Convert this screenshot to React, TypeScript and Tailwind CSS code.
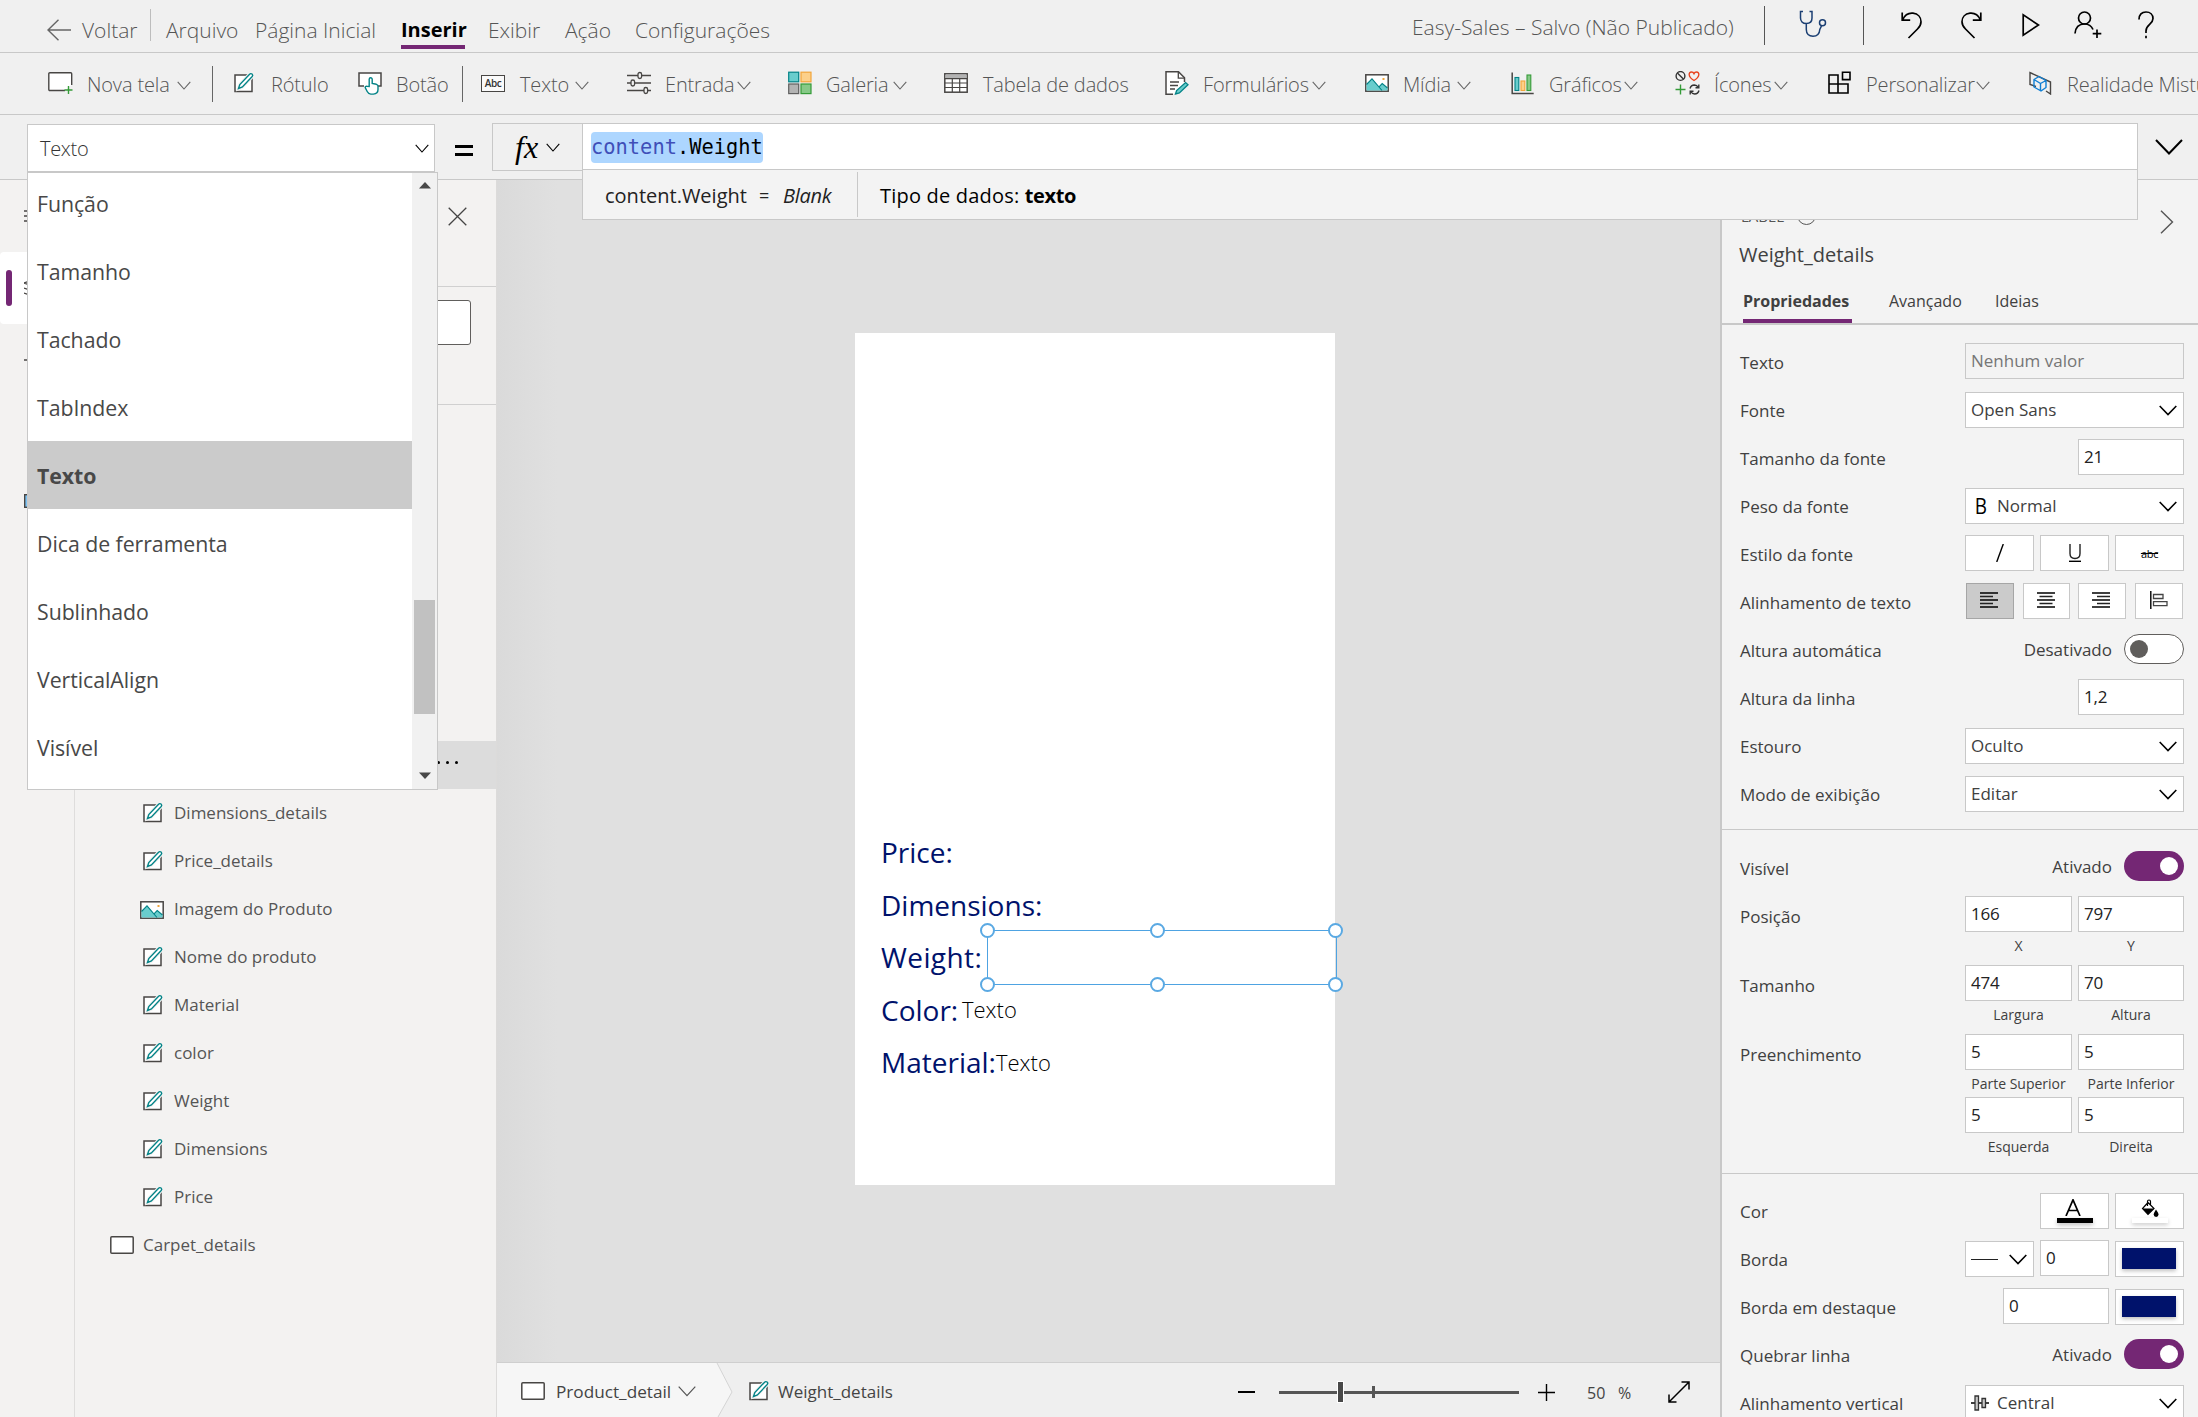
import type { ReactNode } from 'react';

function Svg({ w, h, className = '', children }: { w: number; h: number; className?: string; children: ReactNode }) {
  return (
    <svg width={w} height={h} viewBox={`0 0 ${w} ${h}`} fill="none" className={`shrink-0 ${className}`}>
      {children}
    </svg>
  );
}

function Chevron({ className = '' }: { className?: string }) {
  return (
    <Svg w={14} h={9} className={className}>
      <path d="M0.7 0.8 7 8 13.3 0.8" stroke="currentColor" strokeWidth="1.1" />
    </Svg>
  );
}

function LabelIcon() {
  return (
    <Svg w={24} h={22}>
      <rect x="1" y="3" width="17" height="16.5" fill="#fff" stroke="#484644" strokeWidth="1.5" />
      <path d="M4.5 16.5 5.8 12.6 15.6 2.2a1.7 1.7 0 0 1 2.6 2.3L8.4 15z" fill="#fff" stroke="#f3f2f1" strokeWidth="3.4" />
      <path d="M4.5 16.5 5.8 12.6 15.6 2.2a1.7 1.7 0 0 1 2.6 2.3L8.4 15z" fill="#fff" stroke="#038387" strokeWidth="1.4" />
    </Svg>
  );
}

function ScreenIcon() {
  return (
    <Svg w={24} h={18}>
      <rect x="0.8" y="0.8" width="22.4" height="16.4" rx="1" fill="#fff" stroke="#484644" strokeWidth="1.5" />
    </Svg>
  );
}

function ImageIcon() {
  return (
    <Svg w={24} h={18}>
      <rect x="0.8" y="0.8" width="22.4" height="16.4" fill="#fff" stroke="#484644" strokeWidth="1.5" />
      <path d="M1.5 16.5V10.5L7 4.8l7 8 3.2-3.3 5.3 4.5v2.5z" fill="#69cdcd" />
      <path d="M1.5 10.5 7 4.8l10 11.7M14 12.8l3.2-3.3 5.3 4.5" stroke="#038387" strokeWidth="1.1" />
      <rect x="17.5" y="4" width="2" height="2" fill="#f2a63b" />
    </Svg>
  );
}

const newScreenIcon = (
  <Svg w={26} h={22}>
    <path d="M17 18.5H1.8a1 1 0 0 1-1-1V1.8a1 1 0 0 1 1-1h20.9a1 1 0 0 1 1 1V13" fill="#fff" stroke="#484644" strokeWidth="1.4" />
    <path d="M20.5 14v8M16.5 18h8" stroke="#359b38" strokeWidth="1.4" />
  </Svg>
);

const buttonIcon = (
  <Svg w={24} h={24}>
    <path d="M6 15H1V2h22v13h-3" fill="#fff" stroke="#484644" strokeWidth="1.5" />
    <path
      d="M11.2 15.5V8.2a1.5 1.5 0 0 1 3 0v4.3l4.2.8q1.6.5 1.6 2v3.2q0 4.2-4.6 4.6h-2.6q-2.4-.2-3.6-2.6l-2-3.8q0-1.6 1.6-1.4z"
      fill="#fff"
      stroke="#038387"
      strokeWidth="1.4"
    />
  </Svg>
);

const textIcon = (
  <div className="flex h-[17px] w-6 items-center justify-center border-[1.5px] border-[#484644] bg-[#fafafa] text-[10px] leading-none font-semibold tracking-[-0.4px] text-[#333]">
    Abc
  </div>
);

const inputIcon = (
  <Svg w={24} h={24}>
    <path d="M0 4.5h24M0 12h24M0 19.5h24" stroke="#484644" strokeWidth="1.4" />
    <g fill="#f0f0f0" stroke="#484644" strokeWidth="1.3">
      <rect x="11" y="1.5" width="3.6" height="6" rx="1.8" />
      <rect x="4" y="9" width="3.6" height="6" rx="1.8" />
      <rect x="17" y="16.5" width="3.6" height="6" rx="1.8" />
    </g>
  </Svg>
);

const galleryIcon = (
  <Svg w={24} h={24}>
    <rect x="0.7" y="1.2" width="10" height="9.6" fill="#69cdcd" stroke="#038387" strokeWidth="1.2" />
    <rect x="13" y="1.2" width="10" height="9.6" fill="#fcd08a" stroke="#f2a63b" strokeWidth="1.2" />
    <rect x="0.7" y="13" width="10" height="9.6" fill="#b3b3b3" stroke="#5f5f5f" strokeWidth="1.2" />
    <rect x="13" y="13" width="10" height="9.6" fill="#86c987" stroke="#359b38" strokeWidth="1.2" />
  </Svg>
);

const tableIcon = (
  <Svg w={24} h={20}>
    <rect x="0.8" y="0.8" width="22.4" height="18.4" fill="#fff" stroke="#484644" strokeWidth="1.5" />
    <rect x="1.5" y="1.5" width="21" height="3.6" fill="#b3b3b3" />
    <path d="M1 5.6h22M1 10h22M1 14.5h22M8.3 5.6V19M15.7 5.6V19" stroke="#484644" strokeWidth="1.2" />
  </Svg>
);

const formIcon = (
  <Svg w={24} h={24}>
    <path d="M8 23.2H1V0.8h12.5l6 6V11" fill="#fff" stroke="#484644" strokeWidth="1.5" />
    <path d="M13.3 1v6.2h6M5 11h9M5 14.5h8M5 18h5" stroke="#484644" strokeWidth="1.3" />
    <path d="M10.5 23 11.6 19.6 20.6 11.6l2.4 2.2-8.6 8.2z" fill="#69cdcd" stroke="#038387" strokeWidth="1.3" />
  </Svg>
);

const chartIcon = (
  <Svg w={24} h={23}>
    <path d="M1.2 0.5v21h21.5" stroke="#484644" strokeWidth="1.5" />
    <rect x="4" y="5.5" width="3.8" height="13" fill="#69cdcd" stroke="#038387" strokeWidth="1.1" />
    <rect x="10" y="9" width="3.8" height="9.5" fill="#fcd08a" stroke="#f2a63b" strokeWidth="1.1" />
    <rect x="16" y="3" width="3.8" height="15.5" fill="#86c987" stroke="#359b38" strokeWidth="1.1" />
  </Svg>
);

const iconsIcon = (
  <Svg w={25} h={24}>
    <circle cx="5.5" cy="5" r="4.4" stroke="#333" strokeWidth="1.4" />
    <path d="m2.4 2 6.2 6.2" stroke="#333" strokeWidth="1.4" />
    <path d="M19 9.5C12.5 5.5 13.5 1 16.5 1q1.8 0 2.5 1.6Q19.7 1 21.5 1c3 0 4 4.5-2.5 8.5z" stroke="#e8431f" strokeWidth="1.4" />
    <path d="M5.5 13.5v10M0.5 18.5h10" stroke="#359b38" strokeWidth="1.4" />
    <path d="M15 17.5q1-3.5 4.3-3.5 2.6.1 4 2.5M23.8 13.5v3.3h-3.3M24 19.5q-1 3.5-4.3 3.5-2.6-.1-4-2.5M15.2 23.5v-3.3h3.3" stroke="#333" strokeWidth="1.4" />
  </Svg>
);

const customIcon = (
  <Svg w={24} h={24}>
    <path d="M1 4h9v18H1zM1 13h19v9H10V13M14.5 1.2h7.5v7.4h-7.5z" stroke="#000" strokeWidth="1.6" />
  </Svg>
);

const mixedIcon = (
  <Svg w={24} h={24}>
    <path d="M7 15.5 1 13.5V1.5l20.5 9.5v12l-4.5-3" stroke="#484644" strokeWidth="1.4" />
    <path d="m5 8.5 5-3 7 4v7l-5 3.5-7-4zM5 8.5l6.5 4 5.5-3M11.5 12.5V20" stroke="#0f7fd4" strokeWidth="1.4" strokeLinejoin="round" />
  </Svg>
);

type RibbonItem = { label: string; icon: ReactNode; item: string; text?: string; sep?: string };

const ribbon: RibbonItem[] = [
  { label: 'Nova tela', icon: newScreenIcon, item: 'w-[164px]', text: 'w-[91px] pl-px', sep: 'mr-[21px]' },
  { label: 'Rótulo', icon: <LabelIcon />, item: 'w-[124px]', text: '-ml-px' },
  { label: 'Botão', icon: buttonIcon, item: 'w-[104px]', sep: 'mr-[18px]' },
  { label: 'Texto', icon: textIcon, item: 'w-[146px]', text: 'w-[56px] pl-px' },
  { label: 'Entrada', icon: inputIcon, item: 'w-[161px]', text: 'w-[72px]' },
  { label: 'Galeria', icon: galleryIcon, item: 'w-[156px]', text: 'w-[67px]' },
  { label: 'Tabela de dados', icon: tableIcon, item: 'w-[221px]', text: 'pl-px' },
  { label: 'Formulários', icon: formIcon, item: 'w-[200px]', text: 'w-[109px]' },
  { label: 'Mídia', icon: <ImageIcon />, item: 'w-[146px]', text: 'w-[54px]' },
  { label: 'Gráficos', icon: chartIcon, item: 'w-[164px]', text: 'w-[75px]' },
  { label: 'Ícones', icon: iconsIcon, item: 'w-[153px]', text: 'w-[61px] pl-px' },
  { label: 'Personalizar', icon: customIcon, item: 'w-[201px]', text: 'w-[110px]' },
  { label: 'Realidade Misturada', icon: mixedIcon, item: 'w-[260px]' },
];

const noChevron = ['Rótulo', 'Botão', 'Tabela de dados', 'Realidade Misturada'];

const menu = [
  { label: 'Arquivo', width: 'w-[89px]' },
  { label: 'Página Inicial', width: 'w-[146px]' },
  { label: 'Inserir', width: 'w-[87px]', active: true },
  { label: 'Exibir', width: 'w-[77px]' },
  { label: 'Ação', width: 'w-[70px]' },
  { label: 'Configurações', width: 'w-[200px]' },
];

function Header() {
  return (
    <header className="flex h-[53px] border-b border-[#c8c8c8] pl-[47px] text-[21px] font-light text-[#555]">
      <div className="flex h-full w-[1365px]">
        <Svg w={24} h={22} className="mt-[19px]">
          <path d="M24 11H1M11.5 0.7 1 11l10.5 10.3" stroke="#666" strokeWidth="1.4" />
        </Svg>
        <span className="ml-[11px] w-[68px] pt-[14px] leading-8">Voltar</span>
        <div className="mr-[15px] mt-[9px] h-8 w-px bg-[#bdbdbd]" />
        {menu.map((m) => (
          <div key={m.label} className={`${m.width} pt-[14px] leading-8`}>
            {m.active ? (
              <span className="flex h-[35px] w-16 border-b-4 border-[#742774] text-[20px] font-bold leading-8 text-black">{m.label}</span>
            ) : (
              m.label
            )}
          </div>
        ))}
      </div>
      <span className="w-[352px] pt-[11px] leading-8">Easy-Sales – Salvo (Não Publicado)</span>
      <div className="mt-[6px] flex h-[40px] items-start text-black">
        <div className="h-[39px] w-px bg-[#555]" />
        <Svg w={28} h={28} className="ml-[34px] mt-[4px]">
          <path d="M4 1.5H1.5v6.500c0 3 2 5.500 5.800 5.500s5.700-2.500 5.700-5.500V1.500h-2.500M7.300 13.500v6c0 4 2.600 6.700 6.700 6.700s6.500-2.700 6.800-6.700l1.700-3.600" stroke="#1b3f73" strokeWidth="1.5" />
          <circle cx="23.5" cy="12.8" r="3" stroke="#1b3f73" strokeWidth="1.5" />
        </Svg>
        <div className="ml-[36px] h-[39px] w-px bg-[#555]" />
        <Svg w={22} h={28} className="ml-[37px] mt-[5px]">
          <path d="M1.200 1.500v7.700h8M1.500 9C4 3.500 8 1.800 12 2.200c5 .5 8 4 8 8.500 0 3-1.200 5-3.500 7.300L7.500 27" stroke="#000" strokeWidth="1.7" />
        </Svg>
        <Svg w={22} h={28} className="ml-[37px] mt-[5px]">
          <path d="M20.800 1.500v7.700h-8M20.500 9C18 3.500 14 1.800 10 2.200c-5 .5-8 4-8 8.500 0 3 1.200 5 3.500 7.300l9 9" stroke="#000" strokeWidth="1.7" />
        </Svg>
        <Svg w={18} h={24} className="ml-[40px] mt-[7px]">
          <path d="M1.200 1.800v20.400L16.500 12z" stroke="#000" strokeWidth="1.7" />
        </Svg>
        <Svg w={28} h={28} className="ml-[34px] mt-[5px]">
          <circle cx="10.5" cy="7" r="6" stroke="#000" strokeWidth="1.7" />
          <path d="M1 22.500c.5-6 4-9.500 9.500-9.500 4 0 7 2 8.500 5.500M23 18.500V27M18.700 22.700h8.600" stroke="#000" strokeWidth="1.7" />
        </Svg>
        <Svg w={16} h={28} className="ml-[36px] mt-[5px]">
          <path d="M1 8.500C1 3.500 3.800 1 8 1s7 2.600 7 6.500c0 6-7 6-7 12.500v2M8 24.800v2.400" stroke="#000" strokeWidth="1.7" />
        </Svg>
      </div>
    </header>
  );
}

function Ribbon() {
  return (
    <div className="flex h-[62px] overflow-hidden border-b border-[#c8c8c8] pl-12 text-[20px] font-light tracking-[-0.15px] text-[#555]">
      {ribbon.map((r) => (
        <div key={r.label} className="flex shrink-0">
          <div className={`flex items-center pb-[1px] ${r.item}`}>
            <div className="flex w-[38px] shrink-0">{r.icon}</div>
            <span className={`shrink-0 pt-[4px] whitespace-nowrap ${r.text ?? ''}`}>{r.label}</span>
            {!noChevron.includes(r.label) && <Chevron className="mt-[5px] text-[#666]" />}
          </div>
          {r.sep && <div className={`mt-[13px] h-9 w-px bg-[#666] ${r.sep}`} />}
        </div>
      ))}
    </div>
  );
}

const propertyNames = ['Função', 'Tamanho', 'Tachado', 'TabIndex', 'Texto', 'Dica de ferramenta', 'Sublinhado', 'VerticalAlign', 'Visível'];

function PropertyDropdown() {
  return (
    <div className="absolute left-0 top-[48px] z-20 flex h-[618px] w-[411px] overflow-hidden border border-[#c8c8c8] bg-white">
      <ul className="-mt-1 flex-1 text-[21.3px] tracking-[-0.05px] text-[#484848]">
        {propertyNames.map((name) => (
          <li
            key={name}
            className={`flex h-[68px] items-center pl-[9px] pt-[2px] ${name === 'Texto' ? 'bg-[#cbcbcb] font-bold' : ''}`}
          >
            {name}
          </li>
        ))}
      </ul>
      <div className="flex w-[25px] flex-col items-center bg-[#f1f1f1]">
        <Svg w={12} h={7} className="mt-[9px]">
          <path d="M0 6.500 6 0l6 6.500z" fill="#484848" />
        </Svg>
        <div className="mt-[411px] h-[114px] w-[21px] bg-[#c1c1c1]" />
        <Svg w={12} h={7} className="mt-[58px]">
          <path d="M0 0.500 6 7l6-6.500z" fill="#484848" />
        </Svg>
      </div>
    </div>
  );
}

function FormulaBar() {
  return (
    <div className="flex h-[65px] border-b border-[#c8c8c8] pl-[27px]">
      <div className="relative mt-[9px] h-12 w-[408px]">
        <div className="flex h-12 items-center justify-between border border-[#c8c8c8] bg-white pl-3 pr-[5px] pt-px text-[20px] font-light tracking-[-0.3px] text-[#333]">
          Texto
          <Chevron className="text-black" />
        </div>
        <PropertyDropdown />
      </div>
      <div className="ml-[20px] mt-[30px] flex h-[11px] w-[18px] flex-col justify-between">
        <div className="h-[3px] bg-black" />
        <div className="h-[3px] bg-black" />
      </div>
      <div className="ml-[19px] mt-[8px] flex h-12 w-[91px] items-center border border-r-0 border-[#c8c8c8] pl-[22px]">
        <span className="w-[31px] font-['Liberation_Serif',serif] text-[32px] font-normal italic leading-none text-black">fx</span>
        <Chevron className="text-black" />
      </div>
      <div className="relative -ml-px mt-[8px] h-12 w-[1556px] border border-[#c8c8c8] bg-white">
        <div className="flex h-full items-center pl-[8px]">
          <span className="h-[31px] rounded-[4px] bg-[#add6ff] font-['DejaVu_Sans_Mono',monospace] text-[20.4px] leading-[31px] whitespace-nowrap text-black">
            <span className="text-[#3f4fb8]">content</span>.Weight
          </span>
        </div>
        <div className="absolute -left-px top-[45px] z-10 flex h-[51px] w-[1556px] border border-[#c8c8c8] bg-[#f3f3f3] text-[20px] leading-[51px] text-[#222]">
          <span className="ml-[22px] w-[154px]">content.Weight</span>
          <span className="w-[24px] text-[18px]">=</span>
          <span className="w-[74px] italic tracking-[-0.3px]">Blank</span>
          <div className="mt-[2px] h-[45px] w-px bg-[#c8c8c8]" />
          <span className="ml-[22px] tracking-[0.2px] text-black">
            Tipo de dados: <b className="tracking-[-0.4px]">texto</b>
          </span>
        </div>
      </div>
      <Svg w={28} h={16} className="ml-[17px] mt-[24px]">
        <path d="M1 1l13 13.500L27 1" stroke="#000" strokeWidth="2" />
      </Svg>
    </div>
  );
}

function Rail() {
  return (
    <nav className="flex w-[75px] flex-col border-r border-[#dedddc]">
      <div className="flex h-[72px] items-center pl-6">
        <Svg w={20} h={12}>
          <path d="M0 1h20M0 6h20M0 11h20" stroke="#484644" strokeWidth="1.3" />
        </Svg>
      </div>
      <div className="flex h-[72px] items-center rounded-[4px] bg-white pl-[6px]">
        <div className="h-9 w-[6px] rounded-full bg-[#742774]" />
        <Svg w={24} h={20} className="ml-3">
          <path d="m0 5 12-4 12 4-12 4zM0 10l12 4 12-4M0 15l12 4 12-4" stroke="#484644" strokeWidth="1.3" />
        </Svg>
      </div>
      <div className="flex h-[72px] items-center pl-6">
        <Svg w={22} h={22}>
          <path d="M0 11h22M11 0v22" stroke="#484644" strokeWidth="1.3" />
        </Svg>
      </div>
      <div className="flex h-[72px] items-center pl-[27px]">
        <Svg w={20} h={20}>
          <rect x="0.7" y="1" width="18" height="18" rx="3" fill="#5cb3f0" stroke="#484644" />
        </Svg>
      </div>
      <div className="flex h-[66px] items-center pl-6">
        <Svg w={22} h={14}>
          <rect x="0.7" y="0.7" width="20" height="12.6" fill="#7cc1f2" stroke="#484644" strokeWidth="1.4" />
        </Svg>
      </div>
    </nav>
  );
}

const treeItems = [
  'Dimensions_details',
  'Price_details',
  'Imagem do Produto',
  'Nome do produto',
  'Material',
  'color',
  'Weight',
  'Dimensions',
  'Price',
];

function TreePanel() {
  return (
    <aside className="flex w-[422px] flex-col border-r border-[#dcdbda] text-[17px] text-[#555]">
      <div className="flex h-[107px] shrink-0 justify-end border-b border-[#d0d0d0] pr-[29px] pt-[27px]">
        <Svg w={19} h={19}>
          <path d="M0.7 0.7l17.6 17.6M18.3 0.7 0.7 18.3" stroke="#444" strokeWidth="1.3" />
        </Svg>
      </div>
      <div className="flex h-[118px] shrink-0 justify-end border-b border-[#d0d0d0] pr-[25px] pt-[13px]">
        <div className="h-[45px] w-[360px] rounded-[3px] border border-[#605e5c] bg-white" />
      </div>
      <div className="mt-[336px] flex h-12 shrink-0 items-start justify-end gap-[6px] bg-[#dcdcdc] pr-[38px] pt-[20px]">
        <i className="size-[3px] rounded-full bg-black" />
        <i className="size-[3px] rounded-full bg-black" />
        <i className="size-[3px] rounded-full bg-black" />
      </div>
      {treeItems.map((name) => (
        <div key={name} className="flex h-12 shrink-0 items-center">
          <div className={name === 'Imagem do Produto' ? 'ml-[65px] w-[34px] pt-[1px]' : 'ml-[68px] w-[31px]'}>
            {name === 'Imagem do Produto' ? <ImageIcon /> : <LabelIcon />}
          </div>
          {name}
        </div>
      ))}
      <div className="flex h-12 shrink-0 items-center gap-[9px] pl-[35px]">
        <ScreenIcon />
        Carpet_details
      </div>
    </aside>
  );
}

const screenLabels = [
  { name: 'Price:' },
  { name: 'Dimensions:' },
  { name: 'Weight:', width: 'w-[103px] tracking-[0.4px]' },
  { name: 'Color:', value: 'Texto', width: 'w-[81px]' },
  { name: 'Material:', value: 'Texto', width: 'w-[115px]' },
];

function Handle() {
  return <i className="size-[15px] rounded-full border-2 border-[#5aa9e3] bg-white" />;
}

function Stage() {
  return (
    <div className="flex h-[1182px] items-start bg-[linear-gradient(to_right,#dadada,#e0e0e0_60px)] pl-[358px] pt-[153px]">
      <div className="relative h-[852px] w-[480px] bg-white pl-[26px] pt-[493px] text-[28px] text-[#00126b]">
        {screenLabels.map((l) => (
          <div key={l.name} className="flex h-[52.5px] items-center">
            <span className={`whitespace-nowrap ${l.width ?? ''}`}>{l.name}</span>
            {l.value && <span className="text-[22px] font-light text-black">{l.value}</span>}
          </div>
        ))}
        {/* selection frame with resize handles */}
        <div className="absolute left-[132px] top-[597px] h-[55px] w-[350px] border-[1.5px] border-[#4ea3e2]">
          <div className="absolute -left-[8px] -right-[7px] -top-[8px] grid grid-cols-[178px_1fr_15px] [&>i:nth-child(2)]:-ml-[8px]">
            <Handle />
            <Handle />
            <Handle />
          </div>
          <div className="absolute -bottom-[8px] -left-[8px] -right-[7px] grid grid-cols-[178px_1fr_15px] [&>i:nth-child(2)]:-ml-[8px]">
            <Handle />
            <Handle />
            <Handle />
          </div>
        </div>
      </div>
    </div>
  );
}

function StatusBar() {
  return (
    <footer className="flex h-[55px] border-t border-[#cfcfcf] bg-[#efefef] text-[17px] text-[#444]">
      <div className="relative flex w-[235px] items-center pl-[24px] pt-[3px]">
        <svg width="236" height="54" viewBox="0 0 236 54" className="absolute left-0 top-0">
          <path d="M0 0h220l15 29-14 25H0z" fill="#f6f6f6" />
          <path d="m220 0 15 29-14 25" fill="none" stroke="#d4d4d4" />
        </svg>
        <div className="relative flex items-center">
          <ScreenIcon />
          <span className="ml-[11px] w-[122px] pt-px text-[17.2px]">Product_detail</span>
          <Svg w={18} h={11}>
            <path d="m0.7 0.7 8.3 9 8.3-9" stroke="#555" strokeWidth="1.2" />
          </Svg>
        </div>
      </div>
      <div className="ml-[17px] flex w-[489px] items-center pt-[2px]">
        <LabelIcon />
        <span className="ml-[5px] pt-[2px]">Weight_details</span>
      </div>
      <div className="flex items-center pt-[4px]">
        <div className="h-[1.5px] w-[17px] bg-black" />
        <div className="relative ml-[24px] flex h-6 w-[240px] items-center">
          <div className="h-[3px] w-full bg-[#555]" />
          <div className="absolute left-[58px] top-px h-[22px] w-[7px] border border-white bg-[#484848]" />
          <div className="absolute left-[93px] top-[6px] h-3 w-[3px] bg-[#555]" />
        </div>
        <Svg w={17} h={17} className="ml-[19px]">
          <path d="M0 8.500h17M8.500 0v17" stroke="#000" strokeWidth="1.4" />
        </Svg>
        <span className="ml-[32px] w-[31px] pt-px text-[16px]">50</span>
        <span className="w-[50px] pt-px text-[16px]">%</span>
        <Svg w={22} h={22}>
          <path d="M1.500 20.500l19-19M13.500 1h7.500v7.500M8.500 21H1v-7.500" stroke="#000" strokeWidth="1.5" />
        </Svg>
      </div>
    </footer>
  );
}

const boxClass = 'flex h-9 items-center border border-[#c8c8c8] bg-white';

function Row({ label, height = 'h-12', pad = 'pt-1', children }: { label: string; height?: string; pad?: string; children: ReactNode }) {
  return (
    <div className={`flex items-start justify-between pl-[18px] pr-[14px] ${height}`}>
      <span className="pt-[11px] leading-[25px]">{label}</span>
      <div className={`flex gap-[6px] ${pad}`}>{children}</div>
    </div>
  );
}

function DarkChevron() {
  return (
    <Svg w={18} h={11}>
      <path d="m0.7 1 8.3 8.500L17.300 1" stroke="#000" strokeWidth="1.6" />
    </Svg>
  );
}

function Select({ children }: { children: ReactNode }) {
  return (
    <div className={`${boxClass} w-[219px] justify-between pl-[5px] pr-[6px]`}>
      <span className="flex items-center">{children}</span>
      <DarkChevron />
    </div>
  );
}

function NumberBox({ value, width = 'w-[107px]', caption }: { value: string; width?: string; caption?: string }) {
  return (
    <div className={`${width} text-center`}>
      <div className={`${boxClass} pl-[5px] text-[17px] tracking-[-0.2px] text-[#222]`}>{value}</div>
      {caption && <div className="text-[14px] leading-[27px] whitespace-nowrap">{caption}</div>}
    </div>
  );
}

function Toggle({ on }: { on?: boolean }) {
  return (
    <>
      <span className="mr-[6px] pt-[3px] leading-[25px]">{on ? 'Ativado' : 'Desativado'}</span>
      {on ? (
        <div className="flex h-[30px] w-[60px] items-center justify-end rounded-full bg-[#742774] pr-[6px]">
          <i className="size-[18px] rounded-full bg-white" />
        </div>
      ) : (
        <div className="flex h-[30px] w-[60px] items-center rounded-full border border-[#605e5c] bg-white pl-[5px]">
          <i className="size-[18px] rounded-full bg-[#605e5c]" />
        </div>
      )}
    </>
  );
}

function AlignLines({ d }: { d: string }) {
  return (
    <Svg w={18} h={16} className="mr-[2px]">
      <path d="M0 1h18M0 8h18M0 15h18" stroke="#000" strokeWidth="1.3" />
      <path d={d} stroke="#222" strokeWidth="1.3" />
    </Svg>
  );
}

function Swatch() {
  return (
    <div className={`${boxClass} w-[69px] justify-center pb-[2px] pr-px`}>
      <div className="h-[21px] w-[54px] bg-[#00126b] shadow-[0_2px_4px_rgba(0,0,0,0.25)]" />
    </div>
  );
}

function PropertiesPanel() {
  return (
    <aside className="w-[478px] overflow-hidden border-l-2 border-[#c8c8c8] bg-[#f3f3f3] text-[17px] text-[#404040]">
      <div className="flex h-[61px] justify-between pl-[19px] pr-[24px] pt-[26px] text-[14px] leading-5">
        <span className="flex gap-[13px] text-[15px] text-[#555]">
          LABEL
          <i className="size-[19px] rounded-full border-[1.5px] border-[#555]" />
        </span>
        <Svg w={14} h={24} className="mt-[4px]">
          <path d="M1 0.7 12.5 12 1 23.3" stroke="#555" strokeWidth="1.4" />
        </Svg>
      </div>
      <div className="h-[46px] pl-[17px] text-[20px] leading-7">Weight_details</div>
      <div className="flex h-[38px] border-b-2 border-[#c8c8c8] pl-[21px] text-[16px] leading-[28px]">
        <span className="mr-[37px] h-9 w-[109px] border-b-4 border-[#742774] font-bold">Propriedades</span>
        <span className="w-[106px]">Avançado</span>
        <span>Ideias</span>
      </div>

      <div className="h-[505px] border-b border-[#c8c8c8] pt-[14px]">
        <Row label="Texto">
          <div className="flex h-9 w-[219px] items-center border border-[#c8c8c8] pl-[5px] text-[#767676]">Nenhum valor</div>
        </Row>
        <Row label="Fonte" pad="pt-[5px]">
          <Select>Open Sans</Select>
        </Row>
        <Row label="Tamanho da fonte">
          <NumberBox value="21" width="w-[106px]" />
        </Row>
        <Row label="Peso da fonte" pad="pt-[5px]">
          <Select>
            <span className="w-[26px] pl-[3px] text-[21px] leading-none font-medium text-black">
              <span className="inline-block scale-x-90">B</span>
            </span>
            Normal
          </Select>
        </Row>
        <Row label="Estilo da fonte">
          <div className={`${boxClass} w-[69px] justify-center`}>
            <Svg w={8} h={18}>
              <path d="M7.3 0 0.7 18" stroke="#000" strokeWidth="1.4" />
            </Svg>
          </div>
          <div className={`${boxClass} w-[69px] justify-center`}>
            <Svg w={14} h={20}>
              <path d="M2 1v9.500c0 3 1.800 5 5 5s5-2 5-5V1" stroke="#222" strokeWidth="1.4" />
              <path d="M1 18.300h12" stroke="#000" strokeWidth="1.4" />
            </Svg>
          </div>
          <div className={`${boxClass} w-[69px] justify-center text-[11px] leading-none tracking-[-0.3px] text-black line-through`}>abc</div>
        </Row>
        <Row label="Alinhamento de texto">
          <div className="mr-[3px] flex h-9 w-12 items-center justify-center border border-[#a6a6a6] bg-[#cbcbcb] pb-[3px]">
            <AlignLines d="M0 4.500h13M0 11.500h13" />
          </div>
          <div className={`${boxClass} mr-[2px] w-[47px] justify-center pb-[3px]`}>
            <AlignLines d="M2.500 4.500h13M2.500 11.500h13" />
          </div>
          <div className={`${boxClass} mr-[3px] w-12 justify-center pb-[3px]`}>
            <AlignLines d="M5 4.500h13M5 11.500h13" />
          </div>
          <div className={`${boxClass} mr-px w-12 justify-center pb-[2px]`}>
            <Svg w={18} h={18}>
              <path d="M0.8 0v18" stroke="#000" strokeWidth="1.4" />
              <path d="M3.500 3.500h9.500v4H3.500zM3.500 10.700h13.500v4H3.500z" stroke="#444" strokeWidth="1.3" />
            </Svg>
          </div>
        </Row>
        <Row label="Altura automática" pad="pt-[7px]">
          <Toggle />
        </Row>
        <Row label="Altura da linha">
          <NumberBox value="1,2" width="w-[106px]" />
        </Row>
        <Row label="Estouro" pad="pt-[5px]">
          <Select>Oculto</Select>
        </Row>
        <Row label="Modo de exibição" pad="pt-[5px]">
          <Select>Editar</Select>
        </Row>
      </div>

      <div className="h-[344px] border-b border-[#c8c8c8] pt-[15px]">
        <Row label="Visível" pad="pt-[6px]">
          <Toggle on />
        </Row>
        <Row label="Posição" height="h-[69px]" pad="pt-[3px]">
          <NumberBox value="166" caption="X" />
          <NumberBox value="797" width="w-[106px]" caption="Y" />
        </Row>
        <Row label="Tamanho" height="h-[69px]" pad="pt-[3px]">
          <NumberBox value="474" caption="Largura" />
          <NumberBox value="70" width="w-[106px]" caption="Altura" />
        </Row>
        <Row label="Preenchimento" height="h-[129px]" pad="pt-[3px]">
          <div>
            <NumberBox value="5" caption="Parte Superior" />
            <NumberBox value="5" caption="Esquerda" />
          </div>
          <div>
            <NumberBox value="5" width="w-[106px]" caption="Parte Inferior" />
            <NumberBox value="5" width="w-[106px]" caption="Direita" />
          </div>
        </Row>
      </div>

      <div className="pt-[14px]">
        <Row label="Cor" pad="pt-[5px]">
          <div className={`${boxClass} w-[69px] flex-col pt-[5px]`}>
            <Svg w={18} h={17} className="mr-[3px]">
              <path d="M2 17 9 0.8 16 17M4.500 11.500h9" stroke="#000" strokeWidth="1.7" />
            </Svg>
            <div className="mt-[2px] h-[5px] w-9 shrink-0 bg-black shadow-[0_2px_4px_rgba(0,0,0,0.25)]" />
          </div>
          <div className={`${boxClass} w-[69px] flex-col pt-[5px]`}>
            <Svg w={18} h={18}>
              <path d="M6.500 7V2.500a1.500 1.500 0 0 1 3 0V7M7 3.500 1.500 9.500 7 15.500l6-6-5-5z" stroke="#000" strokeWidth="1.2" />
              <path d="M1.500 9.500h11.500L7 15.500z" fill="#000" />
              <path d="M15 10.500q2.500 3.500 2.500 5a2.300 2.300 0 0 1-4.800 0q0-1.500 2.300-5z" fill="#000" />
            </Svg>
            <div className="mt-px h-[5px] w-9 shrink-0 bg-white shadow-[0_2px_4px_rgba(0,0,0,0.2)]" />
          </div>
        </Row>
        <Row label="Borda" pad="pt-[5px]">
          <div className={`${boxClass} w-[69px] justify-between pl-[5px] pr-[6px]`}>
            <div className="h-px w-[27px] bg-[#222]" />
            <DarkChevron />
          </div>
          <div className="-mt-px">
            <NumberBox value="0" width="w-[69px]" />
          </div>
          <Swatch />
        </Row>
        <Row label="Borda em destaque" pad="pt-[5px]">
          <div className="-mt-px">
            <NumberBox value="0" width="w-[106px]" />
          </div>
          <Swatch />
        </Row>
        <Row label="Quebrar linha" pad="pt-[7px]">
          <Toggle on />
        </Row>
        <Row label="Alinhamento vertical" pad="pt-[5px]">
          <Select>
            <Svg w={18} h={16} className="mr-[8px]">
              <path d="M0 8h4M8 8h3M14.500 8H18" stroke="#000" strokeWidth="1.3" />
              <path d="M4 1h3.500v14H4zM11 3.500h3.500v9H11z" fill="#c8c8c8" stroke="#333" strokeWidth="1.3" />
            </Svg>
            Central
          </Select>
        </Row>
      </div>
    </aside>
  );
}

export default function App() {
  return (
    <div className="flex h-[1417px] w-[2198px] flex-col overflow-hidden bg-[#f0f0f0] font-['Open_Sans','Noto_Sans',sans-serif]">
      <Header />
      <Ribbon />
      <FormulaBar />
      <div className="flex h-[1237px] bg-[#f3f2f1]">
        <Rail />
        <TreePanel />
        <main className="w-[1223px]">
          <Stage />
          <StatusBar />
        </main>
        <PropertiesPanel />
      </div>
    </div>
  );
}
